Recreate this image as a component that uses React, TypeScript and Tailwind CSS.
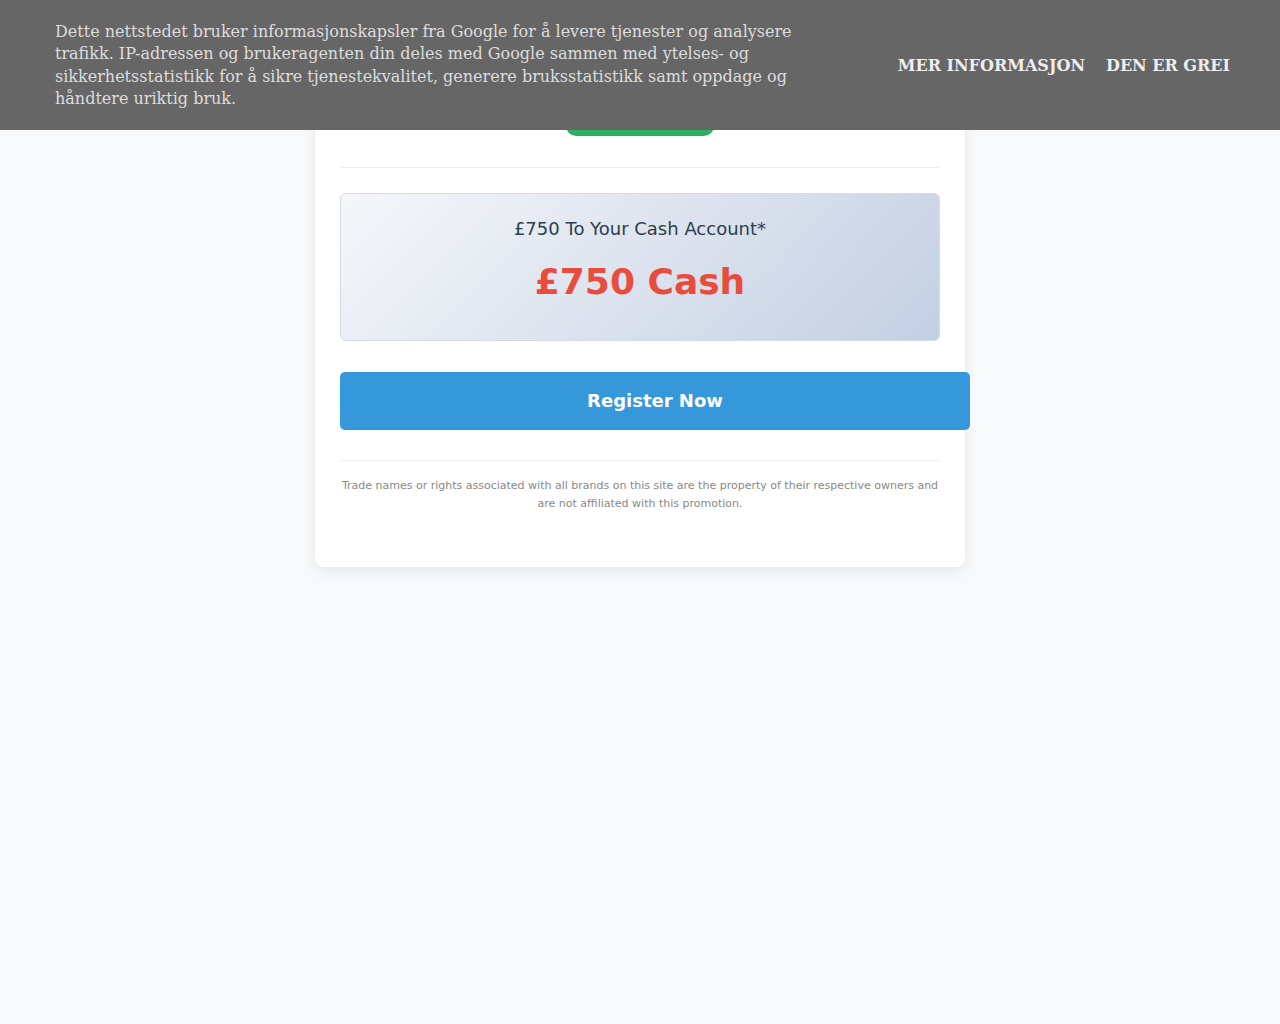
import React from "react";

const CookieBar = () => {
  return (
    <div className="fixed top-0 left-0 right-0 z-10 bg-[#666666] font-['DejaVu_Serif',serif]">
      <div className="flex items-center justify-between pl-[55px] pr-[50px] pt-[21px] pb-[19px]">
        <p className="w-[760px] text-[16px] leading-[22.4px] text-[#dddddd]">
          Dette nettstedet bruker informasjonskapsler fra Google for å levere tjenester og analysere
          trafikk. IP-adressen og brukeragenten din deles med Google sammen med ytelses- og
          sikkerhetsstatistikk for å sikre tjenestekvalitet, generere bruksstatistikk samt oppdage og
          håndtere uriktig bruk.
        </p>
        <div className="flex items-center gap-[21px] text-[16px] font-bold text-[#eeeeee]">
          <a href="#">MER INFORMASJON</a>
          <a href="#">DEN ER GREI</a>
        </div>
      </div>
    </div>
  );
};

export default function App() {
  return (
    <div className="min-h-[1024px] bg-[#f8f9fa] font-['DejaVu_Sans',sans-serif]">
      <CookieBar />

      <div className="pt-[20px] pb-10">
        {/* Card */}
        <div className="mx-auto w-[650px] rounded-[8px] bg-white p-[25px] shadow-[0_4px_14px_rgba(0,0,0,0.08)]">
          {/* top of the card sits under the cookie bar */}
          <div className="h-[45px]" />
          <div className="flex justify-center">
            <span className="block h-[46px] w-[148px] rounded-[10px] bg-[#2eae62]" />
          </div>

          <div className="mt-[31px] h-px bg-[#eeeeee]" />

          {/* Offer box */}
          <div className="mt-[25px] rounded-[6px] border border-[#d4dbe6] bg-[linear-gradient(135deg,#f5f7fa_0%,#c3cfe2_100%)] px-5 pt-[24px] pb-[36px] text-center">
            <p className="text-[18px] leading-[22px] text-[#2c3e50]">£750 To Your Cash Account*</p>
            <p className="mt-[20px] text-[36px] font-bold leading-[44px] text-[#e74c3c]">£750 Cash</p>
          </div>

          {/* CTA */}
          <button className="mt-[31px] box-content block h-[56px] w-full rounded-[5px] bg-[#3498db] px-[15px] pb-[2px] text-[18px] font-bold text-white">
            Register Now
          </button>

          <div className="mt-[30px] h-px bg-[#eeeeee]" />

          <p className="mt-[16px] mb-[29px] text-center text-[11px] leading-[18px] text-[#888888]">
            Trade names or rights associated with all brands on this site are the property of their respective owners and
            are not affiliated with this promotion.
          </p>
        </div>
      </div>
    </div>
  );
}
